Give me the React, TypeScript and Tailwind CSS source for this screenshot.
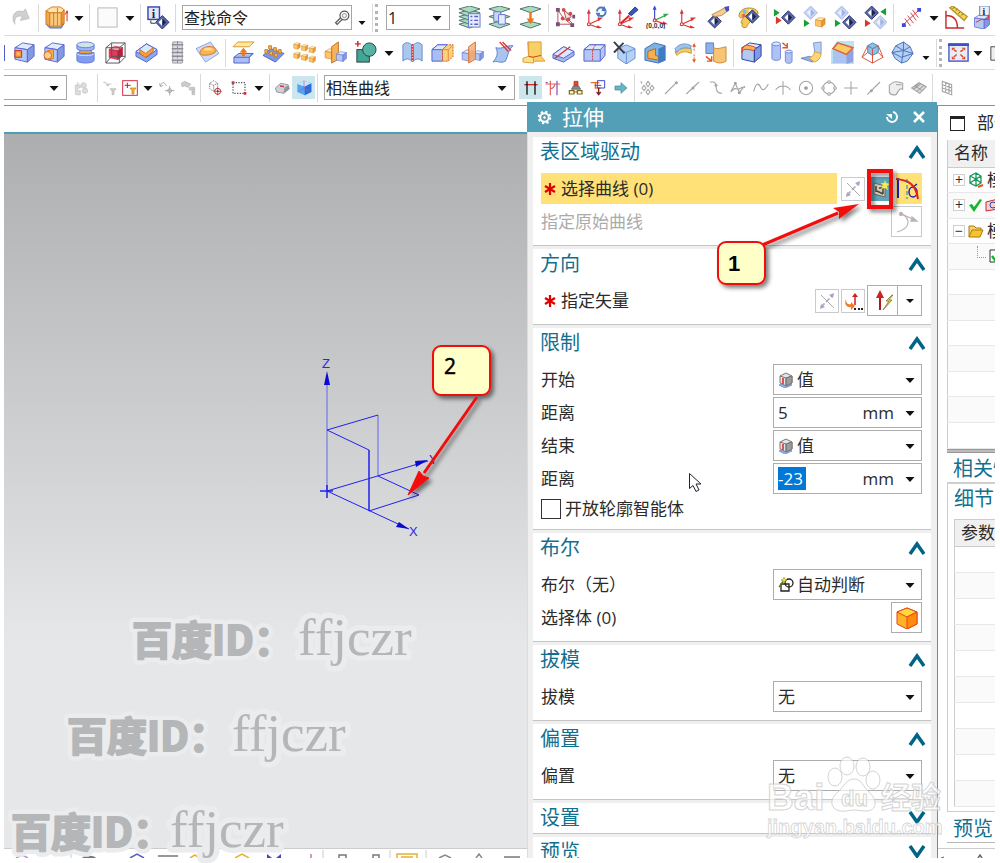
import type { ReactNode } from "react";

/* ---------- shared drawing parts ---------- */

type BoxProps = { x?: number; y?: number; k?: number; t?: string; f?: string; r?: string; s?: string };

function Box({ x = 0, y = 0, k = 1, t = "#dfeafc", f = "#b4c8f4", r = "#8299e4", s = "#5a66d4" }: BoxProps) {
  return (
    <g transform={`translate(${x} ${y}) scale(${k})`} stroke={s} strokeLinejoin="round">
      <path d="M2 7 10 2 22 4 15 9z" fill={t} />
      <path d="M2 7 15 9V22L2 19z" fill={f} />
      <path d="M15 9 22 4V16L15 22z" fill={r} />
    </g>
  );
}

function Diamond({ x, y, pale = false }: { x: number; y: number; pale?: boolean }) {
  const edge = pale ? "#a9b9e6" : "#27306e";
  return (
    <g transform={`translate(${x} ${y})`}>
      <path d="M0-7 7 0 0 7-7 0z" fill={pale ? "#c5d3f5" : "#5a68a8"} stroke={edge} />
      <path d="M-4 0 0-4V4z" fill={pale ? "#eef3ff" : "#fff"} />
      <path d="M4 0 0-4V4z" fill={pale ? "#9fb2e6" : "#1b2250"} />
    </g>
  );
}

function Sheet({ y }: { y: number }) {
  return <path d={`M1 ${y + 3} 12 ${y}l11 3-11 4z`} fill="#a8dcc0" stroke="#55706a" />;
}

function Axes({ x = 0, green = false }: { x?: number; green?: boolean }) {
  const c = green ? "#2fa84a" : "#d33";
  return (
    <g transform={`translate(${x} 0)`} fill="none" strokeWidth="1.2">
      <path d="M4 19V6" stroke={green ? "#3a46d0" : "#d33"} />
      <path d="M4 19 15 23" stroke="#d33" />
      <path d="M4 19 15 14" stroke={c} />
      <path d="M2 8 4 3l2 5z" fill={green ? "#3a46d0" : "#d33"} />
      <path d="M13 12 19 12l-5 4z" fill={c} />
      <path d="M13 20 18 23h-6z" fill="#d33" />
      <circle cx="4" cy="19" r="1.5" fill="#fff" stroke="#d33" />
    </g>
  );
}

const Go = ({ x, y, c = "#18a035", flip = false }: { x: number; y: number; c?: string; flip?: boolean }) => (
  <path d={flip ? `M${x} ${y}l-6 4 6 4z` : `M${x} ${y}l6 4-6 4z`} fill={c} />
);

const OrangeBox = ({ x, y, k = 0.4 }: { x: number; y: number; k?: number }) => (
  <Box x={x} y={y} k={k} t="#fff0b4" f="#ffc463" r="#ee9a2c" s="#c4771a" />
);

function Caret({ low = false }: { low?: boolean }) {
  return (
    <svg viewBox="0 0 16 24" className="h-6 w-4 shrink-0" aria-hidden="true">
      <path d={low ? "M4.500 15h7L8 19z" : "M3.500 10h9L8 15z"} fill="#111" />
    </svg>
  );
}

/* ---------- toolbar icons ---------- */

const icons: Record<string, ReactNode> = {
  redo: <path d="M5 19C0 10 6 3 14 6l2-3 4 10-9 2 2-4C8 9 4 12 5 19z" fill="#d0d0d0" stroke="#c2c2c2" />,
  extrude: (
    <g stroke="#d07c22">
      <path d="M1 19 5 23H17L20 18 15 15H4z" fill="#8eaede" stroke="#4b6fc0" />
      <path d="M1 5 5 7V22L1 18z" fill="#f6a64a" />
      <path d="M5 7H17V21H5z" fill="#fbc97c" />
      <path d="M17 7 20 4V17L17 21z" fill="#ee9836" />
      <path d="M1 5 7 1H16L20 4 17 7H5zM9 7V21M13 2V21" fill="#ffe3a6" />
      <path d="M23 16V6M21 9l2-4 1 3" stroke="#e02020" fill="none" />
    </g>
  ),
  blank: <rect x="2" y="2" width="20" height="20" fill="#fbfbfb" stroke="#b5b5b5" />,
  info: (
    <>
      <rect x="1" y="1" width="12" height="13" fill="#dfe6f6" stroke="#3c45b4" strokeWidth="1.5" />
      <text x="5" y="12" fontSize="13" fontWeight="700" fontFamily="Liberation Serif, serif" fill="#1a2050">i</text>
      <path d="M4 15v3h5" stroke="#333" fill="none" />
      <Diamond x={16} y={17} />
    </>
  ),
  layerList: (
    <>
      <Sheet y={16} /><Sheet y={12} /><Sheet y={8} /><Sheet y={4} /><Sheet y={0} />
      <rect x="11" y="8" width="12" height="14" fill="#e6ebff" stroke="#6a76d0" />
      <path d="M13 11h2M13 15h2M13 19h2M17 11h4M17 15h4M17 19h4" stroke="#5661c8" strokeWidth="1.5" />
    </>
  ),
  layerCopy: (
    <>
      <Sheet y={16} /><Sheet y={8} /><Sheet y={0} />
      <path d="M6 6h7v10H6z" fill="#c9d4f7" stroke="#6a76d0" />
      <path d="M11 9h7v10h-7z" fill="#e5ebff" stroke="#6a76d0" />
    </>
  ),
  layerMove: (
    <>
      <Sheet y={16} /><Sheet y={0} />
      <path d="M12 6v9" stroke="#e87818" strokeWidth="2.5" />
      <path d="M8 13h8l-4 6z" fill="#e87818" />
    </>
  ),
  csysPoints: (
    <g fill="none" stroke="#a55" strokeWidth="1">
      <path d="M3 4v15h14M3 4l6 9 8 6M9 4l8 7M10 4l3 9 5 5" />
      <path d="M9 4l8 7-5 4z" fill="#f4dede" />
      <g fill="#d84848" stroke="none">
        <circle cx="9" cy="4" r="2" /><circle cx="8" cy="13" r="2" /><circle cx="14" cy="14" r="2" /><circle cx="16" cy="8" r="2" />
      </g>
      <g fill="#7d4f78" stroke="none"><path d="M1 2h4v4H1zM1 17h4v4H1zM16 18h4v4h-4zM18 9h3v4h-3z" /></g>
    </g>
  ),
  csysRotate: (
    <>
      <Axes />
      <circle cx="17" cy="6" r="4.500" fill="none" stroke="#4a78c0" strokeWidth="2" strokeDasharray="11 3" />
      <path d="M20 0l3 6-6-1zM14 12l-3-5 5 0z" fill="#4a78c0" />
    </>
  ),
  csysOrient: (
    <>
      <Axes />
      <path d="M5 18 14 10" stroke="#e02424" strokeWidth="2" />
      <path d="M13 8l7-7 3 3-7 6z" fill="#3556c4" stroke="#1e337e" />
    </>
  ),
  csysOrigin: (
    <>
      <g transform="translate(5 -4)"><Axes green /></g>
      <text x="0" y="23" fontSize="7" fontWeight="700" fontFamily="Liberation Sans, sans-serif" fill="#333">(0,0,0)</text>
    </>
  ),
  csysPlain: <Axes x={2} />,
  pick: (
    <>
      <Diamond x={8} y={16} />
      <path d="M5 9 13 5l7-4 2 4-7 5-7 1z" fill="#f5cd96" stroke="#b88a4c" />
      <path d="M18 1l5-1v5l-3 1z" fill="#4551b8" />
    </>
  ),
  palette: (
    <>
      <path d="M2 10C3 1 16 0 21 5c3 4-2 5-5 5 1 5-4 7-6 12-4 2-6-1-4-4-4 1 0-5 1-6-3 1-5 0-5-2z" fill="#f2ca55" stroke="#bb8a30" />
      <circle cx="8" cy="6" r="2" fill="#6fc2ee" /><circle cx="14" cy="5" r="2" fill="#f8f2f0" /><circle cx="7" cy="10" r="2" fill="#e06a50" />
      <Diamond x={16} y={11} />
    </>
  ),
  showOne: <><Go x={1} y={3} /><Go x={3} y={11} c="#d43a2c" /><Diamond x={16} y={12} /></>,
  showBox: <><Diamond x={8} y={7} pale /><Go x={1} y={14} /><OrangeBox x={12} y={11} k={0.5} /></>,
  showNext: <><Diamond x={8} y={7} pale /><Go x={1} y={14} /><Diamond x={16} y={17} /></>,
  showSwap: <><Diamond x={8} y={7} /><Go x={23} y={2} flip /><Go x={1} y={14} c="#d43a2c" /><Diamond x={17} y={17} pale /></>,
  measure: (
    <g stroke="#d4404c" fill="none" strokeWidth="1">
      <path d="M3 20 20 4M5 13l6 8M8 10l6 8M11 7l6 8M13 4l6 8" />
      <path d="M2 18h4v4H2zM18 2h4v4h-4z" fill="#3d48d5" stroke="none" />
    </g>
  ),
  protractor: (
    <g fill="none" stroke="#c52c2c" strokeWidth="1.5">
      <path d="M1 5V23H20M1 10C9 10 13 15 13 23" />
      <path d="M5 2 8 0 23 11 20 15z" fill="#f5d95c" stroke="#bd9a32" />
      <path d="M8 3l2-2M11 5l2-2M14 8l2-2M17 10l2-2" stroke="#7a6220" strokeWidth="1" />
    </g>
  ),
  infoBox: (
    <>
      <Box x={0} y={7} k={0.78} />
      <rect x="7" y="0" width="10" height="10" fill="#eef1fb" stroke="#6e7bb4" />
      <text x="10" y="9" fontSize="10" fontWeight="700" fontFamily="Liberation Serif, serif" fill="#222">i</text>
      <path d="M3 17 9 14h7V9" stroke="#d33" fill="none" />
    </>
  ),

  /* feature row */
  pocket: <><Box /><path d="M2 10h7v7H2z" fill="#f5963a" stroke="#d0301c" /><path d="M4 12h3v3H4z" fill="#ffc46b" /></>,
  boss: (
    <>
      <Box />
      <path d="M5 10 11 9v9l-5 2z" fill="#f7b24b" stroke="#d8781a" />
      <circle cx="5" cy="15" r="4" fill="#fbd080" stroke="#d85a28" />
    </>
  ),
  cylinder: (
    <g stroke="#6a7fd8">
      <path d="M3 12v8c0 4 18 4 18 0v-8z" fill="#7f9cf0" />
      <path d="M6 8h12v5H6z" fill="#f4a33a" stroke="#c26a1a" />
      <path d="M3 4v4c0 3 18 3 18 0V4z" fill="#9cb4f4" />
      <ellipse cx="12" cy="4" rx="9" ry="3" fill="#cfe6e8" />
      <path d="M3 13c0 3 18 3 18 0" fill="none" stroke="#d9e5fb" />
    </g>
  ),
  cage: (
    <>
      <Box x={4} y={4} k={0.7} t="#f8a5b0" f="#e23a58" r="#b8203c" s="#b8203c" />
      <path d="M2 7 8 2h14v15l-6 6H2zM2 7h14v16M16 7l6-5M8 2v14M2 23l6-7h14" fill="none" stroke="#555" />
    </>
  ),
  slotV: (
    <>
      <path d="M1 11 12 3 23 9V14L12 22 1 16z" fill="#8ea8ec" stroke="#5560cf" />
      <path d="M1 11 12 3 23 9 12 17z" fill="#d9e7fc" stroke="#5560cf" />
      <path d="M5 9l6 4 8-6v4l-8 6-6-4z" fill="#f8a13c" stroke="#d46f1c" />
    </>
  ),
  thread: (
    <g>
      <path d="M7 1h10v22H7z" fill="#dcdce2" stroke="#9a9aa2" />
      <path d="M6 4h12M6 8h12M6 12h12M6 16h12M6 20h12" stroke="#8e8e96" strokeWidth="1.5" />
      <path d="M12 0v24" stroke="#e86850" strokeDasharray="3 2" />
    </g>
  ),
  emboss: (
    <>
      <path d="M0 8 15 1 24 13 10 22z" fill="#c9dcfa" stroke="#8aa4dc" />
      <path d="M4 13c0-8 16-10 17-3 0 4-15 7-17 3z" fill="#f9b34f" stroke="#d9762a" />
      <path d="M9 7h7l2 3H8z" fill="#ffdb8c" />
    </>
  ),
  offsetFace: (
    <>
      <path d="M1 6 6 1h17l-5 5z" fill="#ffe898" stroke="#d89838" />
      <path d="M2 17 7 13h15l-4 4v6H2z" fill="#a9bef2" stroke="#5560cf" />
      <path d="M2 17h16l4-4" fill="none" stroke="#5560cf" />
      <path d="M12 16v-5" stroke="#ec7a1e" strokeWidth="3" />
      <path d="M8 12l4-5 4 5z" fill="#ec7a1e" />
    </>
  ),
  patternFace: (
    <>
      <path d="M1 15 9 8l14 5-9 9z" fill="#7e98dc" stroke="#5560cf" />
      {[[3, 12], [8, 14], [13, 16], [7, 8], [12, 10], [17, 12]].map(([x, y]) => (
        <path key={`${x}-${y}`} d={`M${x} ${y}v-3h3v4z`} fill="#f8b84c" stroke="#c97a20" />
      ))}
    </>
  ),
  patternBoxes: (
    <>
      {[[0, 1], [8, 3], [16, 5], [0, 11], [8, 13], [16, 15]].map(([x, y]) => (
        <OrangeBox key={`${x}-${y}`} x={x} y={y} k={0.34} />
      ))}
    </>
  ),
  mirror: (
    <>
      <OrangeBox x={0} y={7} k={0.55} />
      <path d="M8 6 15 1v18l-7 4z" fill="#f6b25a" stroke="#c4701c" />
      <Box x={12} y={10} k={0.52} />
    </>
  ),
  unite: (
    <g stroke="#2c3e3c">
      <rect x="3" y="9" width="13" height="13" fill="#42a595" />
      <circle cx="16" cy="9" r="7" fill="#55b3a4" />
      <path d="M1 3h6M4 0v6" stroke="#d22" strokeWidth="1.5" />
    </g>
  ),
  sew: (
    <g stroke="#6a88d0">
      <path d="M2 4c3-3 6-3 9 0v17c-3-3-6-3-9 0zM13 4c3-3 6-3 9 0v17c-3-3-6-3-9 0z" fill="#a9c8ee" />
      <path d="M12 3v19" stroke="#e03030" strokeDasharray="2 1" strokeWidth="2" />
    </g>
  ),
  split: (
    <>
      <path d="M1 9 7 4h10l-5 5v12H1z" fill="#a9bff4" stroke="#5560cf" />
      <path d="M1 9 7 4h10l-5 5z" fill="#dbe8fb" stroke="#5560cf" />
      <path d="M12 9 17 4h6v12l-5 5h-6z" fill="#fbd27c" stroke="#d8502c" strokeDasharray="2 1" />
      <path d="M12 9h6l5-5M18 9v12" fill="none" stroke="#e08a3c" />
    </>
  ),
  trimBody: (
    <>
      <Box x={0} y={8} k={0.6} /><Box x={12} y={9} k={0.52} />
      <path d="M8 6 15 1v18l-7 4z" fill="#f8b070" fillOpacity=".85" stroke="#d8702c" />
    </>
  ),
  trimSheet: (
    <>
      <path d="M4 7C11 9 15 4 22 5 17 9 17 15 14 21 9 24 5 20 1 22 5 17 7 13 4 7z" fill="#a9c4ee" stroke="#5f7fca" />
      <path d="M8 1l9 10M11 1l9 9" stroke="#e03030" strokeWidth="1.3" />
    </>
  ),
  bend: (
    <g stroke="#d8a038">
      <path d="M6 1h14v15l4 5H11l-4-1z" fill="#f9d068" />
      <path d="M1 18l6-2 5 1v6L1 22z" fill="#fbe08c" />
      <path d="M7 1v15" fill="none" /><path d="M20 15l-9 2-4-1" fill="none" stroke="#d0401c" />
    </g>
  ),
  divide: (
    <>
      <path d="M1 14 12 6l11 5v4L12 22 1 18z" fill="#a2b8ef" stroke="#5560cf" />
      <path d="M1 14 12 6l11 5-11 7z" fill="#dbe8fb" stroke="#5560cf" />
      <path d="M3 18 19 6" stroke="#e03030" strokeWidth="1.5" />
    </>
  ),
  divideBox: (
    <>
      <path d="M1 9 7 4h16v11l-5 6H1z" fill="#b4c6f6" stroke="#5560cf" />
      <path d="M1 9 7 4h16l-5 5z" fill="#dbe8fb" stroke="#5560cf" />
      <path d="M18 9v12" stroke="#5560cf" /><path d="M13 4l-3 5v12" fill="none" stroke="#d33" strokeDasharray="2 1" />
    </>
  ),
  deleteBody: (
    <>
      <path d="M5 8 14 4l9 4v10l-9 6-9-6z" fill="#b4d2f6" stroke="#6a90d0" />
      <path d="M5 8l9 4 9-4M14 12v12" fill="none" stroke="#6a90d0" />
      <path d="M1 1l11 12M11 2 1 12" stroke="#3d3d45" strokeWidth="2" />
    </>
  ),
  shell: (
    <>
      <path d="M1 8 11 2l11 3v15l-7 3L1 20z" fill="#7eb2e4" stroke="#3c6cb4" />
      <path d="M4 11 12 8v7l3 1v4l-11-2z" fill="#f6b04c" stroke="#b86a1a" />
      <path d="M15 8l7-3v15l-7 3z" fill="#3f7cc4" />
    </>
  ),
  thicken: (
    <g>
      <path d="M1 11C6 7 13 7 18 8v5C12 10 7 11 3 15z" fill="#f8cc58" stroke="#c99a34" />
      <path d="M1 8C6 2 13 2 18 5l-1 3C12 6 6 7 3 12z" fill="#9fc4ea" stroke="#6f96d4" />
      <path d="M21 5v6M21 14v6" stroke="#e25a20" strokeDasharray="2 1" />
      <path d="M19 6l2-4 2 4zM19 19l2 4 2-4z" fill="#e25a20" />
    </g>
  ),
  wrap: (
    <g>
      <path d="M2 2h8v11H2z" fill="#8db2ea" stroke="#5a7cc8" />
      <path d="M10 7c4 2 8 0 13-1v15c-5 3-9 2-13 0z" fill="#f9c474" stroke="#c98a34" />
      <path d="M2 16l6 5M8 16v5H3" stroke="#e25a20" strokeWidth="1.5" fill="none" />
    </g>
  ),
  edgeBlend: (
    <>
      <Box s="#2c3f9c" />
      <path d="M2 12C3 8 6 8 14 10L17 7C12 5 8 4 6 4.500 3 6 2 8 2 12z" fill="#f8b45a" stroke="#e04020" />
    </>
  ),
  resize: (
    <g stroke="#7488d8">
      <path d="M2 3v15c0 3 9 3 9 0V3z" fill="#adc2f5" /><ellipse cx="6.500" cy="3" rx="4.500" ry="2" fill="#dbe8fb" />
      <path d="M16 11v10c0 3 7 3 7 0V11z" fill="#adc2f5" /><ellipse cx="19.500" cy="11" rx="3.500" ry="1.500" fill="#dbe8fb" />
      <path d="M13 2l5 4M18 2v5h-5" stroke="#e25a20" strokeWidth="1.5" fill="none" />
    </g>
  ),
  faceBlend: (
    <>
      <path d="M14 2l8-1v12l-6 2z" fill="#b9d0f2" stroke="#7a98d8" />
      <path d="M1 18l9-2 8 3-5 3z" fill="#8fb2ea" stroke="#6a8ad0" />
      <path d="M15 11c0 4-2 6-6 6l6 5c4-1 7-5 7-9z" fill="#ffd678" stroke="#d89f38" />
    </>
  ),
  chamfer: (
    <>
      <path d="M0 10V24H24V0H6z" fill="#b9e4f0" />
      <path d="M2 10h14v13H2z" fill="#abc2f2" /><path d="M16 14l7-6v14l-7 2z" fill="#8fa2e2" />
      <path d="M2 8 7 2l16 5-7 7z" fill="#f8cc68" stroke="#e0603c" strokeWidth="1.5" />
    </>
  ),
  draft: (
    <>
      <path d="M7 5 12 2l6 3v7l-6 3-5-3z" fill="#8fc0e4" stroke="#4a80b8" />
      <path d="M7 5l-6 12 11 6 11-6-5-12M12 8v15M1 17l6-5M23 17l-5-5" fill="none" stroke="#d8503c" />
      <path d="M7 5l5 3 6-3" fill="none" stroke="#4a80b8" />
    </>
  ),
  poly: (
    <g stroke="#4a70b8">
      <path d="M5 5 13 1l7 5 3 7-6 8-6 2-7-5-3-6z" fill="#b4d0f4" />
      <path d="M5 5l8 5 7-4M1 12l12-2 10 3M13 10 11 23M1 12l10 5 12-4M13 1v9" fill="none" />
    </g>
  ),
  fit: (
    <>
      <rect x="2" y="3" width="20" height="18" fill="#e8ecf6" stroke="#4c5ecc" strokeWidth="1.5" />
      <path d="M1 4h22" stroke="#3c50c8" strokeWidth="2.5" />
      <g stroke="#e04828" fill="#e04828" strokeWidth="1.5">
        <path d="M7 9l3 2M17 9l-3 2M7 17l3-3M17 17l-3-3" />
        <path d="M5 7h4l-4 3zM19 7h-4l4 3zM5 19h4l-4-3zM19 19h-4l4-3z" stroke="none" />
      </g>
    </>
  ),
  edge: <path d="M4 6h20v14H4z" fill="#eee" stroke="#444" />,

  /* selection row */
  partsOff: <g fill="#ddd" stroke="#c2c2c2"><path d="M3 8h8v4H7v4h4v6H4zM5 6h5M7 3v6" /><circle cx="16" cy="8" r="4" /><circle cx="18" cy="16" r="4" /></g>,
  filterOff: <g fill="#ccc" stroke="#bbb"><path d="M2 4c4-3 4 2 6 5 3 0 3-4 6-3M12 13h9l-3 4v5h-3v-5z" /></g>,
  filterOn: (
    <>
      <rect x="1" y="1" width="22" height="22" fill="#fff" stroke="#dc2c44" strokeWidth="1.5" />
      <path d="M4 8h9M8 4v8" stroke="#b02030" strokeWidth="1.5" />
      <path d="M12 12h9l-3 4v5h-3v-5z" fill="#f6b32e" stroke="#c27d14" />
    </>
  ),
  moveOff: <g fill="none" stroke="#aaa" strokeWidth="1.5"><path d="M2 9C4 2 9 3 11 9M1 5l1 5 4-2M9 16h14M16 9v14" /><circle cx="16" cy="16" r="3" /></g>,
  findOff: <g fill="#ccc" stroke="#b4b4b4"><path d="M2 5l5-3 9 4-4 5-5-2-4 1zM14 11h8v11h-4v-7h-4zM18 14h4M18 18h4" /></g>,
  cubeAdd: (
    <>
      <path d="M4 5 10 1l6 4v8l-6 4-6-4zM4 5l6 3 6-3M10 8v9" fill="none" stroke="#555" strokeDasharray="2 1" />
      <circle cx="16" cy="17" r="4.500" fill="#fff" stroke="#c03030" strokeWidth="1.5" /><path d="M10 17h12M16 11v12" stroke="#a02828" /><circle cx="16" cy="17" r="1.5" fill="#444" />
    </>
  ),
  marquee: <><rect x="3" y="4" width="18" height="16" fill="none" stroke="#333" strokeDasharray="2 2" strokeWidth="1.5" /><path d="M1 2h4v4H1zM19 18h4v4h-4z" fill="#d43040" /></>,
  shade: <><path d="M2 12 10 5l11 2 2 6-8 7-11-2z" fill="#cfcfd6" stroke="#77777f" /><path d="M9 9l6 1" stroke="#d43040" strokeWidth="2" /><path d="M14 20l2-9 6-3 1 6z" fill="#9595a0" /></>,
  shadedCube: (
    <>
      <path d="M2 6 12 1l11 4v13l-10 5-11-5z" fill="#4fa6f8" /><path d="M2 6 12 1l11 4-10 5z" fill="#c5e8ff" /><path d="M13 10l10-5v13l-10 5z" fill="#2c6ce0" />
      <path d="M12 1v12l8 3M12 13l-8 4" stroke="#d05070" fill="none" />
    </>
  ),
  snapLines: <><path d="M2 7h20" stroke="#e02424" strokeWidth="2" /><path d="M6 2v20M18 2v20" stroke="#111" strokeWidth="2" /></>,
  crossSnap: <g strokeWidth="1.8" fill="none"><path d="M8 1v22M1 6h22" stroke="#e86060" /><path d="M18 1v22M1 4h3" stroke="#8c50a8" /><path d="M8 13c4 0 6-3 7-7" stroke="#e86060" /></g>,
  chain: <><path d="M9 2h6v8H9z" fill="#e84a28" stroke="#a02818" /><path d="M5 14h14l-3-5H8z" fill="#888" stroke="#555" /><path d="M2 16h7v5H2zM14 16h7v5h-7zM8 18h7" fill="none" stroke="#7d6a10" strokeWidth="1.8" /></>,
  follow: <g fill="none" strokeWidth="2"><path d="M1 4h13M8 4v8h8" stroke="#f07020" /><path d="M11 1h11v11H11zM7 8h10" stroke="#4048d0" strokeWidth="1.5" /><path d="M13 12v9M10 18l3 4 3-4" stroke="#802028" /></g>,
  next: <path d="M3 9h9V4l9 8-9 8v-5H3z" fill="#62b8c4" stroke="#4a7f90" />,
  diamonds: <path d="M12 2l3 4-3 4-3-4zM12 14l3 4-3 4-3-4zM6 8l3 4-3 4-3-4zM18 8l3 4-3 4-3-4zM1 2l2 3M1 21l2-3" />,
  line: <><path d="M3 21 20 4" /><circle cx="20" cy="4" r="1.5" fill="#999" /></>,
  midline: <><path d="M2 21 21 3" /><circle cx="12" cy="12" r="1.5" fill="#999" /></>,
  curve: <><path d="M3 3h5c5 0 3 6 5 12 1 4 4 5 8 5" /><circle cx="12" cy="8" r="1.5" /></>,
  spline: <><path d="M1 18 8 5l6 14 8-10M1 17c5-1 3-5 8-4 6 4 6-4 14-2" /><circle cx="8" cy="5" r="1.5" /><circle cx="14" cy="19" r="1.5" /></>,
  wave: <path d="M1 17C5 2 9 5 12 12c3 6 8 0 11-6" />,
  arcMid: <path d="M1 15c5-8 17-8 22 0M12 2v20" />,
  circleDot: <><circle cx="12" cy="12" r="10" /><circle cx="12" cy="12" r="2" fill="#999" /></>,
  circleQuad: <><circle cx="12" cy="12" r="9" /><g fill="#fff"><circle cx="12" cy="3" r="2" /><circle cx="12" cy="21" r="2" /><circle cx="3" cy="12" r="2" /><circle cx="21" cy="12" r="2" /></g></>,
  plus: <path d="M12 2v20M2 12h20" />,
  tangent: <><path d="M2 22 21 3" /><circle cx="8" cy="16" r="1.5" fill="#999" /></>,
  surface: <path d="M2 8C8 1 16 2 22 5v9c-5-3-6 3-10 8-5 1-9-1-10-4zM12 7h8" fill="#eee" />,
  mesh: <path d="M1 12 12 4l11 6-10 10zM6 9l11 7M12 4 4 14M9 17l10-9M4 14l10-8" fill="#ddd" />,
  grid: <path d="M5 2l14 5v15L5 17zM5 7l14 5M5 12l14 5M10 4v15M15 6v15" />,
};

const grayIcons = [
  "diamonds", "line", "midline", "curve", "spline", "wave", "arcMid",
  "circleDot", "circleQuad", "plus", "tangent", "surface", "mesh", "grid",
];

function Tool({ name, small = false, active = false }: { name: string; small?: boolean; active?: boolean }) {
  const gray = grayIcons.includes(name);
  return (
    <button
      type="button"
      aria-label={name}
      className={`flex shrink-0 items-center justify-center ${active ? "h-[23px] w-[23px] bg-[#cbe6ec]" : ""}`}
    >
      <svg
        viewBox="0 0 24 24"
        className={small ? "h-4 w-4" : "h-[23px] w-[23px]"}
        fill={gray ? "none" : undefined}
        stroke={gray ? "#a3a3a3" : undefined}
        strokeWidth={gray ? 1.6 : undefined}
        aria-hidden="true"
      >
        {icons[name]}
      </svg>
    </button>
  );
}

function Group({ names, width, small }: { names: string[]; width: string; small?: boolean }) {
  return (
    <div className={`flex shrink-0 items-center justify-around ${width}`}>
      {names.map((n) => (
        <Tool key={n} name={n} small={small} />
      ))}
    </div>
  );
}

const Sep = () => <div className="mx-[2px] h-7 w-px shrink-0 bg-[#d9d9d9]" />;
const Grip = () => <div className="mr-1 h-7 shrink-0 border-l-3 border-dotted border-[#b4b4b4]" />;

function BarSelect({ label, value, width }: { label: string; value: string; width: string }) {
  return (
    <div className={`flex h-[25px] shrink-0 items-center border border-[#a6a6a6] bg-white pl-px ${width}`}>
      <select aria-label={label} className="h-full min-w-0 flex-1 appearance-none bg-transparent outline-none">
        <option>{value}</option>
      </select>
      <span className="mr-1">
        <Caret />
      </span>
    </div>
  );
}

function Toolbars() {
  return (
    <header className="text-base text-[#222]">
      <div className="flex h-9 items-center overflow-hidden border-b border-[#dcdcdc] pl-[2px]">
        <Group names={["redo"]} width="w-[30px]" />
        <Sep />
        <Group names={["extrude"]} width="w-[30px]" />
        <Caret />
        <Sep />
        <Group names={["blank"]} width="w-[30px]" />
        <Caret />
        <Sep />
        <Group names={["info"]} width="w-[30px]" />
        <Sep />
        <div className="ml-1 flex h-[25px] w-[170px] shrink-0 items-center border border-[#a6a6a6] px-px">
          <input aria-label="查找命令" defaultValue="查找命令" className="w-full min-w-0 flex-1 outline-none" />
          <svg viewBox="0 0 20 20" className="h-4 w-4" fill="none" stroke="#555" strokeWidth="1.5" aria-hidden="true">
            <circle cx="13" cy="7" r="5.500" />
            <circle cx="13" cy="7" r="2.500" stroke="#aaa" />
            <path d="M8 10l-6 6 2 2 6-6" />
          </svg>
        </div>
        <span className="ml-[2px]">
          <Caret low />
        </span>
        <Sep />
        <Grip />
        <div className="ml-1">
          <BarSelect label="工作图层" value="1" width="w-16" />
        </div>
        <Group names={["layerList", "layerCopy", "layerMove"]} width="ml-1 w-[92px]" />
        <Sep />
        <Group names={["csysPoints", "csysRotate", "csysOrient", "csysOrigin", "csysPlain", "pick", "palette"]} width="w-[213px]" />
        <Sep />
        <Group names={["showOne", "showBox", "showNext", "showSwap"]} width="w-[122px]" />
        <Sep />
        <Group names={["measure"]} width="w-[30px]" />
        <Caret />
        <Group names={["protractor", "infoBox"]} width="w-[56px]" />
      </div>

      <div className="flex h-[34px] items-center overflow-hidden border-b border-[#dcdcdc]">
        <div className="h-4 w-px shrink-0 bg-[#5560cf]" />
        <Group names={["pocket", "boss", "cylinder", "cage", "slotV", "thread", "emboss"]} width="ml-1 w-[214px]" />
        <Sep />
        <Group names={["offsetFace", "patternFace", "patternBoxes", "mirror", "unite"]} width="w-[153px]" />
        <Caret />
        <Group
          names={["sew", "split", "trimBody", "trimSheet", "bend", "divide", "divideBox", "deleteBody", "shell", "thicken", "wrap"]}
          width="w-[334px]"
        />
        <Sep />
        <Group names={["edgeBlend", "resize", "faceBlend", "chamfer", "draft", "poly"]} width="w-[182px]" />
        <Caret low />
        <Sep />
        <Grip />
        <Group names={["fit"]} width="w-6" />
        <Caret />
        <Group names={["edge"]} width="w-6" />
      </div>

      <div className="flex h-9 items-center overflow-hidden border-b border-[#8f8f8f]">
        <div className="-ml-px">
          <BarSelect label="类型过滤器" value="" width="w-16" />
        </div>
        <Group names={["partsOff"]} width="w-7" small />
        <Sep />
        <Group names={["filterOff", "filterOn"]} width="w-10" small />
        <Caret />
        <Group names={["moveOff", "findOff"]} width="w-[42px]" small />
        <Sep />
        <Group names={["cubeAdd", "marquee"]} width="w-12" small />
        <Caret />
        <Sep />
        <Group names={["shade"]} width="w-5" small />
        <Tool name="shadedCube" small active />
        <Sep />
        <div className="mx-1">
          <BarSelect label="曲线规则" value="相连曲线" width="w-[191px]" />
        </div>
        <Tool name="snapLines" small active />
        <Group names={["crossSnap", "chain", "follow", "next"]} width="w-[90px]" small />
        <Sep />
        <Group
          names={["diamonds", "line", "midline", "curve", "spline", "wave", "arcMid", "circleDot", "circleQuad", "plus", "tangent", "surface", "mesh"]}
          width="w-[293px]"
          small
        />
        <Sep />
        <Group names={["grid"]} width="w-6" small />
      </div>
    </header>
  );
}

/* ---------- graphics window ---------- */

const marks = [
  { x: 132, nameX: 298, y: 655 },
  { x: 67, nameX: 232, y: 751 },
  { x: 11, nameX: 170, y: 847 },
];

function BottomStrip({ children }: { children: ReactNode }) {
  return (
    <div className="h-[10px] shrink-0 overflow-hidden border-t border-[#ccc] bg-white">
      <svg className="h-[9px] w-full" fill="none" aria-hidden="true">
        {children}
      </svg>
    </div>
  );
}

function GraphicsWindow() {
  return (
    <section className="flex min-w-0 flex-1 flex-col">
      <div className="h-[26px] shrink-0 bg-white" />
      <div className="relative min-h-0 flex-1 overflow-hidden border-t-2 border-[#4d9db6] bg-[linear-gradient(#adaeb0_0px,#e6e7e8_510px)]">
        <svg className="absolute inset-0 h-full w-full" aria-label="坐标系">
          <g transform="translate(-4 -134)" fill="none" stroke="#2020f0">
            <path d="M327 491V375M378 415v61" stroke="#6464ee" />
            <path d="M327 430l51-15M327 430l42 20M327 491l101-30M378 476l41 19-50 16M327 491l82 38" />
            <path d="M369 450v61M320 491h13M327 485v13" strokeWidth="1.5" />
            <g fill="#0a0ad0" stroke="none">
              <path d="M324 385h6L327 371z" />
              <path d="M415 461l13-1-12 7z" />
              <path d="M399 522l10 7-13-2z" />
            </g>
            <g fill="#2a2ae0" stroke="none" fontFamily="Liberation Sans, sans-serif" fontSize="13">
              <text x="322" y="368">Z</text>
              <text x="429" y="464">Y</text>
              <text x="409" y="536">X</text>
            </g>
          </g>
        </svg>
      </div>
      <BottomStrip>
        <path d="M12 9l6-3 6 3" stroke="#c08ad0" strokeWidth="1.5" />
        <path d="M67 1v8M319 1v8M386 1v8M422 1v8" stroke="#ccc" />
        <path d="M78 9c2-3 12-3 14 0z" fill="#777" />
        <path d="M126 9l7-4 7 4" stroke="#5560c0" strokeWidth="1.5" />
        <path d="M154 7h20M335 9V6h7v3M369 9V6h6v3M500 8h16" stroke="#777" strokeWidth="1.5" />
        <path d="M186 9l5-3 4 3M231 9l7-4 7 4M393 9V5h20v4M397 8h12" stroke="#e8b030" strokeWidth="1.5" />
        <path d="M201 5v4" stroke="#1c7be0" strokeWidth="2" />
        <path d="M263 5l5 4h-5zM277 5v4h-5z" fill="#4a44c4" />
        <path d="M307 5v4" stroke="#a03090" />
        <path d="M435 9l6-3 6 3M472 9l3-4 3 4" stroke="#889" strokeWidth="1.5" />
      </BottomStrip>
    </section>
  );
}

/* ---------- dialog ---------- */

function Section({ title, open = true, children }: { title: string; open?: boolean; children?: ReactNode }) {
  return (
    <section className="mx-[6px] mb-[3px] shrink-0 border-b border-[#c4c4c4] bg-white">
      <button type="button" aria-expanded={open} className="flex h-[30px] w-full items-center justify-between pr-[5px] pl-[7px]">
        <h2 className="text-xl leading-[30px] text-[#12708f]">{title}</h2>
        <svg viewBox="0 0 18 14" className="h-[14px] w-[18px]" fill="none" stroke="#006487" strokeWidth="3.5" aria-hidden="true">
          <path d={open ? "M2 13 9 3 16 13" : "M2 1 9 11 16 1"} />
        </svg>
      </button>
      {open && <div className="mt-[6px] flex flex-col gap-[2px] pr-[9px] pb-2 pl-2">{children}</div>}
    </section>
  );
}

function Field({ label, icon, value }: { label: string; icon?: ReactNode; value: string }) {
  return (
    <label className="flex h-[31px] items-center justify-between">
      {label}
      <span className="flex h-[31px] w-[149px] items-center border border-[#adadad] bg-white pr-[3px] pl-1">
        {icon}
        <select className="h-full min-w-0 flex-1 appearance-none bg-transparent outline-none">
          <option>{value}</option>
        </select>
        <Caret />
      </span>
    </label>
  );
}

function Distance({ value, selected = false }: { value: string; selected?: boolean }) {
  return (
    <label className="flex h-[31px] items-center justify-between">
      距离
      <span className="flex h-[31px] w-[149px] items-center border border-[#adadad] bg-white pr-[3px] pl-1">
        <input
          defaultValue={value}
          className={`h-[23px] w-7 leading-[23px] outline-none ${selected ? "bg-[#0078d7] text-white" : ""}`}
        />
        <span className="ml-auto pr-2">mm</span>
        <Caret />
      </span>
    </label>
  );
}

const valueIcon = (
  <svg viewBox="0 0 16 16" className="mr-[3px] h-4 w-4" stroke="#777" aria-hidden="true">
    <path d="M1 13l6 3 7-3-6-3z" fill="#8bb4f0" stroke="#7a9cd8" />
    <path d="M2 4l6-3 6 3v7l-6 3-6-3z" fill="#e4e4e4" />
    <path d="M8 6l6-2v7l-6 3z" fill="#9c9c9c" />
    <path d="M2 4l6 2 6-2M8 6v8" fill="none" />
    <path d="M5 12V6" stroke="#e02020" strokeWidth="1.5" />
  </svg>
);

const inferIcon = (
  <svg viewBox="0 0 16 16" className="mr-[3px] h-4 w-4" fill="none" stroke="#222" strokeWidth="1.3" aria-hidden="true">
    <path d="M3 7h8v7H3z" />
    <circle cx="11" cy="6" r="4" />
    <path d="M1 10l5-7" stroke="#667020" />
    <path d="M6 0l1 2 2 1-2 1-1 2-1-2-2-1 2-1z" fill="#e8dd30" stroke="#99901c" strokeWidth=".5" />
  </svg>
);

const Star = () => (
  <svg viewBox="0 0 12 12" className="mr-[5px] h-3 w-3" stroke="#e00000" strokeWidth="2.2" aria-hidden="true">
    <path d="M6 0v12M1 3l10 6M11 3 1 9" />
  </svg>
);

function SmallButton({ label, children }: { label: string; children: ReactNode }) {
  return (
    <button type="button" aria-label={label} className="flex h-6 w-6 items-center justify-center border border-[#c9c9cf] bg-white">
      <svg viewBox="0 0 20 20" className="h-5 w-5" aria-hidden="true">
        {children}
      </svg>
    </button>
  );
}

const flip = (
  <>
    <path d="M4 4l13 13" stroke="#aaa" />
    <path d="M4 16 16 4" stroke="#a9a4c4" strokeDasharray="5 2" strokeWidth="1.5" />
    <path d="M12 4l5-2-1 5zM4 13l-1 5 5-2z" fill="#a9a4c4" />
  </>
);

function ExtrudeDialog() {
  return (
    <aside className="relative z-10 -mt-1 flex w-[410px] shrink-0 flex-col overflow-hidden bg-[#efefef] text-[17px] leading-6 text-[#2b2b2b]">
      <div className="flex h-[30px] shrink-0 items-center bg-[#539fb8] pr-[11px] pl-[10px] text-white">
        <svg viewBox="0 0 16 16" className="h-[15px] w-[15px]" fill="none" stroke="#fff" aria-hidden="true">
          <circle cx="8" cy="8" r="6" strokeWidth="2.5" strokeDasharray="2.400 2.312" />
          <circle cx="8" cy="8" r="4.500" strokeWidth="2" />
          <circle cx="8" cy="8" r="1" fill="#fff" />
        </svg>
        <h1 className="ml-[10px] flex-1 text-[21px] leading-[30px]">拉伸</h1>
        <button type="button" aria-label="重置">
          <svg viewBox="0 0 14 14" className="h-[14px] w-[14px]" fill="none" stroke="#fff" strokeWidth="2" aria-hidden="true">
            <path d="M8 2a5 5 0 1 1-6 5" />
            <path d="M1 4h6v5z" fill="#fff" stroke="none" />
          </svg>
        </button>
        <button type="button" aria-label="关闭" className="ml-[13px]">
          <svg viewBox="0 0 14 14" className="h-[14px] w-[14px]" stroke="#fff" strokeWidth="2.5" aria-hidden="true">
            <path d="M2 2l10 10M12 2 2 12" />
          </svg>
        </button>
      </div>

      <div className="flex min-h-0 flex-1 flex-col overflow-hidden border-l border-[#dcdcdc] pt-[5px] *:-ml-px">
        <div className="mx-0 flex flex-col">
          <Section title="表区域驱动">
            <div className="flex h-[31px] items-center">
              <div className="flex h-full flex-1 items-center bg-[#ffe177] pl-[3px]">
                <Star />
                选择曲线 (0)
              </div>
              <div className="ml-1">
                <SmallButton label="反向">{flip}</SmallButton>
              </div>
              <button type="button" aria-label="绘制截面" className="ml-1 flex h-6 w-6 items-center justify-center bg-[#5da5bb]">
                <svg viewBox="0 0 20 20" className="h-5 w-5" aria-hidden="true">
                  <path d="M3 4l11 3v11L3 15z" fill="#d6cdae" stroke="#666" />
                  <path d="M5 7v6M8 9h4v6M6 12l6 3" fill="none" stroke="#444" strokeWidth="1.5" />
                  <path d="M14 1l1 3 4 1-3 2 1 4-3-2-4 1 2-3-2-3h3z" fill="#f7ea4a" />
                </svg>
              </button>
              <button type="button" aria-label="曲线" className="ml-[3px] flex h-[31px] w-[26px] items-center justify-center bg-[#ffe177]">
                <svg viewBox="0 0 26 26" className="h-[26px] w-[26px]" fill="none" strokeWidth="2" aria-hidden="true">
                  <path d="M2 2v20" stroke="#2020c0" />
                  <ellipse cx="17" cy="16" rx="4" ry="5" stroke="#2020c0" strokeWidth="1.5" />
                  <path d="M17 11l4-3" stroke="#2020c0" strokeWidth="1.5" />
                  <path d="M0 3c12 1 20 5 22 20" stroke="#e02020" />
                  <path d="M11 3v20" stroke="#208080" strokeWidth="1" strokeDasharray="4 2" />
                </svg>
              </button>
            </div>
            <div className="flex h-[31px] items-center justify-between text-[#ababab]">
              指定原始曲线
              <button type="button" aria-label="原始曲线" disabled className="flex h-[31px] w-[31px] items-center justify-center border border-[#c9c9c9]">
                <svg viewBox="0 0 24 24" className="h-6 w-6" fill="none" stroke="#b8b8b8" strokeWidth="1.3" aria-hidden="true">
                  <path d="M6 3c10 6 10 15-4 19" />
                  <path d="M6 4l12 5" stroke="#c8a8a8" />
                  <circle cx="6" cy="4" r="1.5" fill="#c8a8a8" />
                  <path d="M17 7l5 4h-6z" fill="#c8a8a8" />
                </svg>
              </button>
            </div>
          </Section>

          <Section title="方向">
            <div className="flex h-[31px] items-center gap-[2px] pl-[3px]">
              <div className="flex flex-1 items-center">
                <Star />
                指定矢量
              </div>
              <SmallButton label="反向">{flip}</SmallButton>
              <SmallButton label="矢量对话框">
                <path d="M3 8c0 5 3 6 5 5v-2l4 4-4 4v-3C3 17 1 12 3 8z" fill="#ee7c28" />
                <path d="M12 14V6" stroke="#d02020" strokeWidth="1.5" />
                <path d="M9 6h6l-3-4z" fill="#d02020" />
                <path d="M11 17h2v2h-2zM15 17h2v2h-2zM18 17h2v2h-2z" fill="#222" />
              </SmallButton>
              <div className="flex h-[31px] border border-[#adadad]">
                <button type="button" aria-label="自动判断的矢量" className="flex w-[30px] items-center justify-center border-r border-[#adadad]">
                  <svg viewBox="0 0 20 22" className="h-[22px] w-5" aria-hidden="true">
                    <path d="M7 20V6" stroke="#b01818" strokeWidth="2" />
                    <path d="M3 8h8L7 0z" fill="#d02020" />
                    <path d="M19 5l-6 6h3l-6 9 9-10h-3l4-5z" fill="#f4e13a" stroke="#77703c" strokeWidth=".8" />
                  </svg>
                </button>
                <button type="button" aria-label="更多矢量" className="flex w-[23px] items-center justify-center">
                  <svg viewBox="0 0 8 4" className="h-1 w-2" aria-hidden="true">
                    <path d="M0 0h8L4 4z" fill="#111" />
                  </svg>
                </button>
              </div>
            </div>
          </Section>

          <Section title="限制">
            <Field label="开始" icon={valueIcon} value="值" />
            <Distance value="5" />
            <Field label="结束" icon={valueIcon} value="值" />
            <Distance value="-23" selected />
            <label className="flex h-[25px] items-center gap-1">
              <input type="checkbox" className="h-5 w-5 appearance-none border border-[#333] bg-white" />
              开放轮廓智能体
            </label>
          </Section>

          <Section title="布尔">
            <Field label="布尔（无）" icon={inferIcon} value="自动判断" />
            <div className="flex h-[31px] items-center justify-between">
              选择体 (0)
              <button type="button" aria-label="选择体" className="flex h-[31px] w-[31px] items-center justify-center border border-[#adadad]">
                <svg viewBox="0 0 22 22" className="h-[22px] w-[22px]" stroke="#e8451c" strokeLinejoin="round" aria-hidden="true">
                  <path d="M1 5 11 1l10 4v12l-10 5-10-5z" fill="#ffb224" />
                  <path d="M1 5 11 1l10 4-10 5z" fill="#ffd83a" />
                  <path d="M11 10l10-5v12l-10 5z" fill="#ff8a0c" />
                </svg>
              </button>
            </div>
          </Section>

          <Section title="拔模">
            <Field label="拔模" value="无" />
          </Section>
          <Section title="偏置">
            <Field label="偏置" value="无" />
          </Section>
          <Section title="设置" open={false} />
          <Section title="预览" open={false} />
        </div>
      </div>
    </aside>
  );
}

/* ---------- part navigator ---------- */

const Toggle = ({ sign }: { sign: string }) => (
  <button type="button" aria-label="展开" className="flex h-3 w-3 shrink-0 items-center justify-center border border-[#d0d0d0] bg-white text-sm leading-3">
    {sign}
  </button>
);

const treeRows: ReactNode[] = [
  <>
    <Toggle sign="+" />
    <svg viewBox="0 0 16 16" className="h-4 w-4 shrink-0" fill="none" stroke="#18945c" strokeWidth="1.3" aria-hidden="true">
      <path d="M2 4l6-3 5 3v7l-5 3-6-3zM2 4l6 3 5-3M8 1v13M2 11l6-4 5 4" />
      <path d="M10 15l5-2" stroke="#f05020" strokeWidth="2" />
    </svg>
    模型视图
  </>,
  <>
    <Toggle sign="+" />
    <svg viewBox="0 0 14 14" className="h-[14px] w-[14px] shrink-0" aria-hidden="true">
      <path d="M1 7l3-1 2 3 6-8 2 1-8 12z" fill="#17b52f" />
    </svg>
    <svg viewBox="0 0 14 14" className="h-[14px] w-[14px] shrink-0" fill="#f4d0d0" stroke="#d02828" aria-hidden="true">
      <path d="M1 4l12-3v10l-12 2z" />
      <circle cx="8" cy="7" r="3" stroke="#3040a0" />
    </svg>
  </>,
  <>
    <Toggle sign="−" />
    <svg viewBox="0 0 16 14" className="h-[14px] w-4 shrink-0" stroke="#a97b14" aria-hidden="true">
      <path d="M1 13V2h5l2 2h5v3" fill="#f8d568" />
      <path d="M1 13l3-7h11l-3 7z" fill="#fbc22e" />
    </svg>
    模型历史
  </>,
  <>
    <span className="mb-2 ml-6 h-3 w-[9px] border-b border-l border-dotted border-[#999]" />
    <svg viewBox="0 0 14 14" className="h-[14px] w-[14px] shrink-0" fill="#fff" stroke="#333" aria-hidden="true">
      <path d="M1 1h12v12H1z" />
      <path d="M3 7l3 4 6-7" fill="none" stroke="#17b52f" strokeWidth="2.5" />
    </svg>
  </>,
];

function PartNavigator() {
  return (
    <aside className="flex w-[58px] shrink-0 flex-col overflow-hidden border-l border-[#858585] bg-white text-[17px] leading-6 whitespace-nowrap text-[#2b2b2b]">
      <div className="flex h-[34px] shrink-0 items-center gap-3 pl-3">
        <span className="h-[15px] w-[15px] shrink-0 border border-t-3 border-[#222]" />
        部件导航器
      </div>
      <table className="ml-[9px] w-[120px] shrink-0 border-collapse border-l border-[#ccc]">
        <thead>
          <tr className="h-[27px] border-b border-[#ccc] bg-[#f0f0f0]">
            <th className="p-0 pl-[6px] text-left font-normal">名称</th>
          </tr>
        </thead>
      </table>
      <table className="ml-[9px] h-[281px] w-[120px] shrink-0 table-fixed border-collapse border-l border-[#ccc]">
        <tbody>
          {Array.from({ length: 11 }, (_, i) => (
            <tr key={i} className="border-b border-[#e8e8e8] even:bg-[#fafafa]">
              <td className="p-0">
                <div className="flex h-[24px] items-center gap-[3px] overflow-hidden pl-[5px]">{treeRows[i]}</div>
              </td>
            </tr>
          ))}
        </tbody>
      </table>
      <div className="ml-[9px] h-1 shrink-0 border-y border-[#999] bg-[#bbb]" />
      <h2 className="ml-[9px] h-[31px] shrink-0 border-b-2 border-[#cfcfcf] pl-[6px] text-xl leading-[31px] text-[#12708f]">相关性</h2>
      <div className="ml-[9px] min-h-0 flex-1 border-b border-l border-[#ccc] pl-[6px]">
        <h2 className="h-[35px] text-xl leading-[29px] text-[#12708f]">细节</h2>
        <table className="w-[120px] border-collapse border border-[#ccc]">
          <thead>
            <tr className="h-[27px] border-b border-[#ccc] bg-[#f0f0f0]">
              <th className="p-0 pl-[6px] text-left font-normal">参数</th>
            </tr>
          </thead>
          <tbody>
            {Array.from({ length: 10 }, (_, i) => (
              <tr key={i} className="h-[26px] border-b border-[#e8e8e8] even:bg-[#fafafa]">
                <td className="p-0" />
              </tr>
            ))}
          </tbody>
        </table>
      </div>
      <h2 className="mb-[5px] ml-[9px] h-[31px] shrink-0 border-b border-[#bbb] pl-[6px] text-xl leading-[33px] text-[#12708f]">预览</h2>
      <BottomStrip>
        <path d="M3 9l3-1" stroke="#d33" />
        <path d="M40 9l2-3 2 3" stroke="#666" strokeWidth="1.5" />
      </BottomStrip>
    </aside>
  );
}

/* ---------- annotations and watermarks ---------- */

function Annotations() {
  return (
    <svg className="pointer-events-none absolute inset-0 z-20 h-full w-full" aria-label="标注">
      <defs>
        <filter id="drop" x="-20%" y="-20%" width="150%" height="150%">
          <feDropShadow dx="3" dy="3" stdDeviation="2" floodColor="#000" floodOpacity=".5" />
        </filter>
      </defs>

      {marks.map((m) => (
        <g key={m.y} strokeLinejoin="round">
          {[true, false].map((halo) => (
            <g key={String(halo)} fill={halo ? "#ebecee" : "#b5b6b8"} stroke={halo ? "#ebecee" : "#b5b6b8"}>
              <text x={m.x} y={m.y} fontSize="40" fontWeight="700" strokeWidth={halo ? 11 : 2} fontFamily="Noto Sans CJK SC, sans-serif">
                百度ID：
              </text>
              <text x={m.nameX} y={m.y} fontSize="53" strokeWidth={halo ? 11 : 0} fontFamily="Liberation Serif, serif">
                ffjczr
              </text>
            </g>
          ))}
        </g>
      ))}

      <g filter="url(#drop)">
        <rect x="869" y="171" width="22" height="36" fill="none" stroke="#f20d0d" strokeWidth="4" />
        <path d="M760 246 838 213" stroke="#f20d0d" strokeWidth="3" />
        <path d="M859 204l-26 4 6 4 0 7z" fill="#f20d0d" />
        <path d="M477 397 424 473" stroke="#f20d0d" strokeWidth="3" />
        <path d="M408 495l11-24 4 5 6 2z" fill="#f20d0d" stroke="#f20d0d" />
        <rect x="718" y="242" width="47" height="42" rx="8" fill="#ffffc8" stroke="#f20d0d" strokeWidth="2" />
        <rect x="433" y="346" width="57" height="49" rx="8" fill="#ffffc8" stroke="#f20d0d" strokeWidth="2" />
      </g>
      <g fill="#000">
        <text x="728" y="271" fontSize="22" fontWeight="700" fontFamily="Liberation Sans, sans-serif">1</text>
        <text x="444" y="374" fontSize="21" stroke="#000" strokeWidth=".4" fontFamily="Noto Sans, sans-serif">2</text>
      </g>

      <path d="M689.500 473.500v15l3.500-3 3 6 3-1.500-3-6h5z" fill="#fff" stroke="#223" />

      <g fill="#fff" fillOpacity=".65" stroke="#c8c8c8" strokeOpacity=".8" fontWeight="700">
        <text x="767" y="810" fontSize="37" fontFamily="Liberation Sans, sans-serif">Bai</text>
        <ellipse cx="835" cy="777" rx="7" ry="9" />
        <ellipse cx="847" cy="766" rx="7" ry="9" />
        <ellipse cx="863" cy="767" rx="7" ry="9" />
        <ellipse cx="873" cy="780" rx="7" ry="9" />
        <path d="M854 779c8 0 9 8 15 13 9 8 8 19-3 19-5 0-7-1-12-1s-9 2-14 1c-11-2-10-13-2-19 6-5 8-13 16-13z" />
        <text x="841" y="806" fontSize="22" fontFamily="Liberation Sans, sans-serif">du</text>
        <text x="881" y="808" fontSize="30" fontFamily="Noto Sans CJK SC, sans-serif">经验</text>
        <text x="767" y="834" fontSize="20" strokeWidth=".8" fontFamily="Liberation Sans, sans-serif">jingyan.baidu.com</text>
      </g>
    </svg>
  );
}

export default function App() {
  return (
    <div className="relative h-screen overflow-hidden bg-white font-['Open_Sans','Noto_Sans_CJK_SC',sans-serif]">
      <div className="flex h-full flex-col pr-[5px] pb-[5px] pl-1">
        <Toolbars />
        <main className="flex min-h-0 flex-1">
          <GraphicsWindow />
          <ExtrudeDialog />
          <PartNavigator />
        </main>
      </div>
      <Annotations />
    </div>
  );
}
